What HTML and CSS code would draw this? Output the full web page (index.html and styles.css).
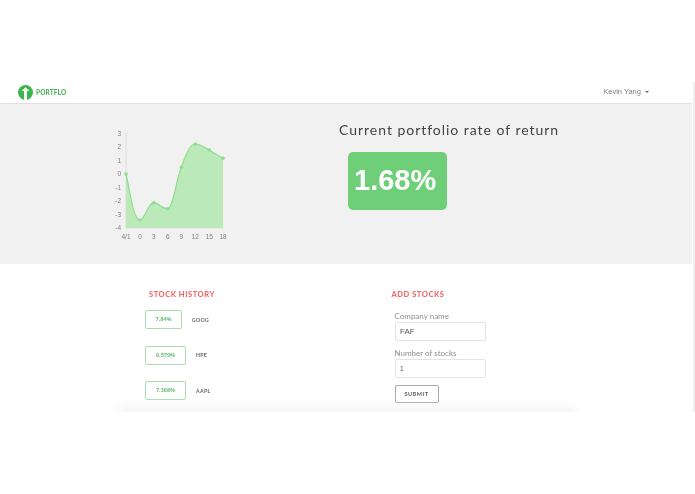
FILE: index.html
```html
<!DOCTYPE html>
<html lang="en">
<head>
    <meta charset="UTF-8">
    <meta name="viewport" content="width=device-width, initial-scale=1.0">
    <title>Portflo</title>
    <link rel="stylesheet" href="styles.css">
</head>
<body>
    <div class="page">
        <nav class="navbar">
            <div class="brand">
                <svg class="brand-logo" width="15" height="15" viewBox="0 0 15 15">
                    <circle cx="7.5" cy="7.5" r="7.5" fill="#3cb54a"/>
                    <path d="M7.5 2.2 L11.4 6 H9 V15 H6 V6 H3.6 Z" fill="#fff"/>
                </svg>
                <span class="brand-name">PORTFLO</span>
            </div>
            <div class="user-menu">Kevin Yang <span class="caret"></span></div>
        </nav>

        <section class="hero">
            <div class="chart">
                <svg width="125" height="120" viewBox="0 0 125 120">
                    <path class="axis" d="M16 7 V102.300"/>
                    <g class="tick-labels">
                        <text x="11" y="9.600">3</text>
                        <text x="11" y="23.300">2</text>
                        <text x="11" y="36.800">1</text>
                        <text x="11" y="50.300">0</text>
                        <text x="11" y="63.800">-1</text>
                        <text x="11" y="77.300">-2</text>
                        <text x="11" y="90.800">-3</text>
                        <text x="11" y="104.300">-4</text>
                    </g>
                    <path class="area" d="M16 48 C20 64 23 94 30 94 C35 94 38 76.700 43.700 76.700 C49 76.700 52 83 57.700 82.700 C63 82 66 55 71.300 41.300 C76 28 80 18 85.300 18 C90 18 95 21.500 99.300 24 C104 27 108 29.500 113 32.300 V102.300 H16 Z"/>
                    <path class="line" d="M16 48 C20 64 23 94 30 94 C35 94 38 76.700 43.700 76.700 C49 76.700 52 83 57.700 82.700 C63 82 66 55 71.300 41.300 C76 28 80 18 85.300 18 C90 18 95 21.500 99.300 24 C104 27 108 29.500 113 32.300"/>
                    <g class="points">
                        <circle cx="16" cy="48" r="1.800"/>
                        <circle cx="30" cy="94" r="1.800"/>
                        <circle cx="43.700" cy="76.700" r="1.800"/>
                        <circle cx="57.700" cy="82.700" r="1.800"/>
                        <circle cx="71.300" cy="41.300" r="1.800"/>
                        <circle cx="85.300" cy="18" r="1.800"/>
                        <circle cx="99.300" cy="24" r="1.800"/>
                        <circle cx="113" cy="32.300" r="1.800"/>
                    </g>
                    <g class="x-labels">
                        <text x="16" y="112.500">4/1</text>
                        <text x="30" y="112.500">0</text>
                        <text x="43.700" y="112.500">3</text>
                        <text x="57.700" y="112.500">6</text>
                        <text x="71.300" y="112.500">9</text>
                        <text x="85.300" y="112.500">12</text>
                        <text x="99.300" y="112.500">15</text>
                        <text x="113" y="112.500">18</text>
                    </g>
                </svg>
            </div>
            <div class="rate">
                <h1 class="rate-title">Current portfolio rate of return</h1>
                <div class="rate-box">1.68%</div>
            </div>
        </section>

        <section class="lower">
            <div class="history">
                <h2 class="section-title history-title">STOCK HISTORY</h2>
                <div class="stock-row">
                    <div class="stock-rate">7.84%</div>
                    <div class="stock-name">GOOG</div>
                </div>
                <div class="stock-row">
                    <div class="stock-rate wide">6.579%</div>
                    <div class="stock-name">HPE</div>
                </div>
                <div class="stock-row">
                    <div class="stock-rate wide">7.368%</div>
                    <div class="stock-name">AAPL</div>
                </div>
            </div>
            <form class="add-stocks">
                <h2 class="section-title">ADD STOCKS</h2>
                <label class="field-label">Company name</label>
                <div class="field-input big">FAF</div>
                <label class="field-label second">Number of stocks</label>
                <div class="field-input">1</div>
                <div class="submit">SUBMIT</div>
            </form>
            <div class="fade"></div>
        </section>
    </div>
    <div class="scroll-track"></div>
</body>
</html>
```

FILE: styles.css
```css
body {
    margin: 0;
    display: flex;
    background: #fff;
    font-family: "Liberation Sans", Arial, sans-serif;
}
.page {
    flex: none;
    width: 692px;
    height: 494px;
    padding-top: 80px;
    box-sizing: border-box;
    overflow: hidden;
    filter: blur(0.35px);
}
.scroll-track {
    flex: none;
    width: 2px;
    height: 330px;
    margin: 82px 0 0 1px;
    background: #eee;
}
.navbar {
    height: 23px;
    display: flex;
    justify-content: space-between;
    align-items: center;
    padding: 0 43px 0 18px;
    background: #fff;
    border-bottom: 1px solid #dfdfdf;
}
.brand {
    display: flex;
    align-items: center;
    gap: 3px;
    margin-top: 2px;
}
.brand-name {
    font-family: Lato, sans-serif;
    font-size: 6.500px;
    font-weight: 900;
    letter-spacing: 0.1px;
    color: #4cb860;
}
.user-menu {
    font-size: 7.500px;
    color: #808080;
    margin-top: -1px;
}
.caret {
    display: inline-block;
    width: 0;
    height: 0;
    margin-left: 2px;
    vertical-align: 1px;
    border-top: 2.500px solid #666;
    border-left: 2.500px solid transparent;
    border-right: 2.500px solid transparent;
}
.hero {
    height: 160px;
    display: flex;
    background: #f1f1f1;
}
.chart {
    margin: 22px 0 0 110px;
    width: 125px;
    height: 120px;
}
.axis {
    stroke: #ddd;
    stroke-width: 1;
    fill: none;
}
.tick-labels text,
.x-labels text {
    font-size: 6.500px;
    fill: #808080;
}
.tick-labels text {
    text-anchor: end;
}
.x-labels text {
    text-anchor: middle;
}
.area {
    fill: #bce9b9;
}
.line {
    fill: none;
    stroke: #8ede8e;
    stroke-width: 1.200;
}
.points circle {
    fill: #8ede8e;
}
.rate {
    margin-left: 104px;
}
.rate-title {
    margin: 17px 0 0;
    font-family: Lato, sans-serif;
    font-size: 14px;
    font-weight: 400;
    letter-spacing: 0.97px;
    line-height: 17px;
    color: #444;
}
.rate-box {
    margin: 14px 0 0 9px;
    width: 93px;
    height: 58px;
    padding-left: 6px;
    line-height: 57px;
    border-radius: 5px;
    background: #6fcf78;
    color: #fff;
    font-size: 29px;
    font-weight: 700;
}
.lower {
    position: relative;
    height: 148px;
    display: flex;
    overflow: hidden;
    background: #fff;
}
.section-title {
    margin: 0;
    font-family: Lato, sans-serif;
    font-size: 7.500px;
    font-weight: 900;
    letter-spacing: 0.55px;
    line-height: 10px;
    color: #f4696c;
}
.history {
    width: 243px;
    margin: 26px 0 0 145px;
}
.history-title {
    margin-left: 4px;
    margin-bottom: 10px;
}
.stock-row {
    height: 19px;
    margin-bottom: 16.500px;
    display: flex;
    align-items: center;
}
.stock-rate {
    width: 35px;
    height: 17px;
    line-height: 17px;
    border: 1px solid #a8deaf;
    border-radius: 2px;
    text-align: center;
    font-family: "Open Sans", sans-serif;
    font-size: 5.500px;
    font-weight: 700;
    color: #6cbf78;
}
.stock-rate.wide {
    width: 39px;
}
.stock-name {
    margin-left: 10px;
    font-family: Lato, sans-serif;
    font-size: 5.200px;
    font-weight: 900;
    letter-spacing: 0.3px;
    color: #707070;
}
.add-stocks {
    margin: 26px 0 0 3.500px;
    width: 120px;
}
.field-label {
    display: block;
    margin: 11px 0 0 3px;
    font-family: Lato, sans-serif;
    font-size: 8px;
    line-height: 10px;
    color: #8f8f8f;
}
.field-label.second {
    margin-top: 7px;
}
.field-input {
    width: 85px;
    height: 17px;
    margin: 1px 0 0 3px;
    padding-left: 4.500px;
    line-height: 17px;
    border: 1px solid #e4e4e4;
    border-radius: 2px;
    font-size: 6.500px;
    color: #555;
}
.field-input.big {
    font-size: 8px;
}
.submit {
    width: 42px;
    height: 16px;
    margin: 7px 0 0 3px;
    line-height: 16px;
    text-align: center;
    border: 1px solid #aaa;
    border-radius: 2px;
    font-family: Lato, sans-serif;
    font-size: 5.500px;
    font-weight: 900;
    letter-spacing: 0.5px;
    color: #666;
}
.fade {
    position: absolute;
    left: 122px;
    right: 120px;
    bottom: -1px;
    height: 1px;
    box-shadow: 0 0 12px 3px #ececec;
}
```
